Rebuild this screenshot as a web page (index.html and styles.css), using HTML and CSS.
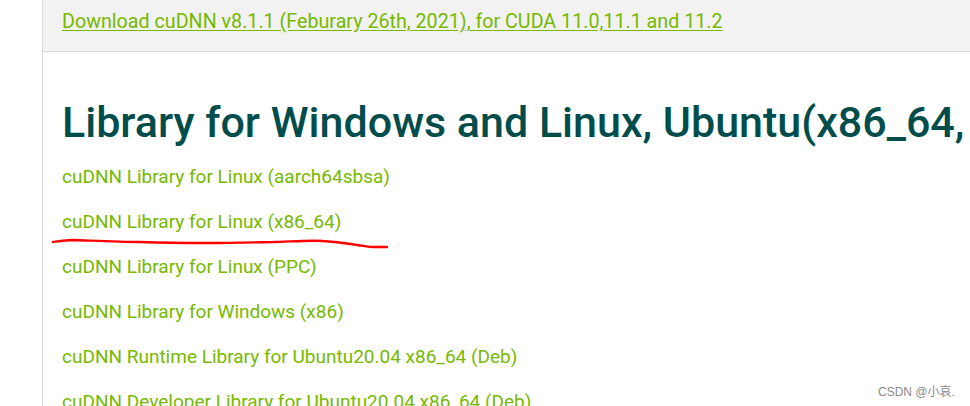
FILE: index.html
```html
<!DOCTYPE html>
<html>
<head>
<meta charset="utf-8">
<link rel="stylesheet" href="styles.css">
</head>
<body>
<div class="page">
  <div class="content">
    <div class="top">
      <a class="dl" href="#">Download cuDNN v8.1.1 (Feburary 26th, 2021), for CUDA 11.0,11.1 and 11.2</a>
    </div>
    <div class="main">
      <h2 class="title">Library for Windows and Linux, Ubuntu(x86_64, ARMsbsa, PPC architecture)</h2>
      <ul class="links">
        <li><a href="#">cuDNN Library for Linux (aarch64sbsa)</a></li>
        <li><a href="#">cuDNN Library for Linux (x86_64)</a></li>
        <li><a href="#">cuDNN Library for Linux (PPC)</a></li>
        <li><a href="#">cuDNN Library for Windows (x86)</a></li>
        <li><a href="#">cuDNN Runtime Library for Ubuntu20.04 x86_64 (Deb)</a></li>
        <li><a href="#">cuDNN Developer Library for Ubuntu20.04 x86_64 (Deb)</a></li>
      </ul>
    </div>
  </div>
</div>
<svg class="mark" width="970" height="406" viewBox="0 0 970 406">
  <path d="M53 242 C60 241 66 240 73 240 C100 241 120 242 140 242 C170 243 190 243 207 243 C240 243 260 242 273 242 C300 241 315 240 323 241 C340 242 350 244 357 245 C365 246 370 247 373 247 L387 247" fill="none" stroke="#ff0000" stroke-width="2.4" stroke-linecap="round"/>
</svg>
<div class="wm">CSDN @小哀.</div>
</body>
</html>
```
FILE: styles.css
```css
html, body {
  margin: 0;
  padding: 0;
  background: #fff;
  overflow: hidden;
}
.page {
  width: 970px;
  height: 406px;
  padding-left: 42px;
  box-sizing: border-box;
  overflow: hidden;
}
.content {
  border-left: 1px solid #dcdcdc;
  height: 100%;
  white-space: nowrap;
}
.top {
  background: #f2f2f2;
  border-bottom: 1px solid #dcdcdc;
  height: 52px;
  box-sizing: border-box;
  padding: 10px 0 0 19px;
}
.dl {
  font-family: Roboto, sans-serif;
  font-size: 19.7px;
  line-height: 24px;
  color: #76b900;
  text-decoration: underline;
  text-underline-offset: 2px;
}
.main {
  padding-left: 19px;
}
.title {
  margin: 42px 0 0 0;
  font-family: Roboto, sans-serif;
  font-weight: 500;
  font-size: 43px;
  line-height: 56px;
  color: #004d4b;
}
.links {
  list-style: none;
  margin: 4px 0 0 0;
  padding: 0;
}
.links li {
  height: 45px;
  font-family: Roboto, sans-serif;
  font-size: 19px;
  line-height: 45px;
}
.links a {
  color: #76b900;
  text-decoration: none;
}
.mark {
  position: absolute;
  left: 0;
  top: 0;
  pointer-events: none;
}
.wm {
  position: absolute;
  left: 878px;
  top: 382px;
  font-family: "Liberation Sans", "Noto Sans CJK SC", sans-serif;
  font-size: 12px;
  color: #8a8a8a;
}
```
